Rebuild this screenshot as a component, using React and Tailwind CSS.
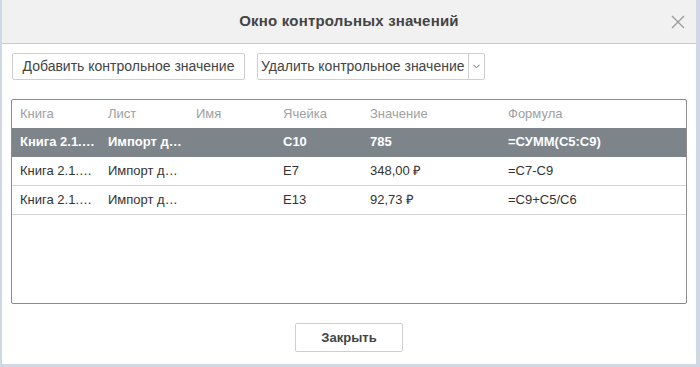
import { useState } from "react";

const rows = [
  { book: "Книга 2.1.…", sheet: "Импорт д…", name: "", cell: "C10", value: "785", formula: "=СУММ(C5:C9)" },
  { book: "Книга 2.1.…", sheet: "Импорт д…", name: "", cell: "E7", value: "348,00 ₽", formula: "=C7-C9" },
  { book: "Книга 2.1.…", sheet: "Импорт д…", name: "", cell: "E13", value: "92,73 ₽", formula: "=C9+C5/C6" },
];

// ширины колонок таблицы
const cols = ["w-[88px]", "w-[88px]", "w-[87px]", "w-[87px]", "w-[138px]", "flex-1"];

function Row({ r, selected, onClick }) {
  const cells = [r.book, r.sheet, r.name, r.cell, r.value, r.formula];
  return (
    <div
      onClick={onClick}
      className={
        "flex h-[29px] items-center border-b " +
        (selected ? "bg-[#7d848a] text-white font-bold border-[#7d848a]" : "text-[#333] border-[#d5d5d5]")
      }
    >
      {cells.map((c, i) => (
        <div key={i} className={cols[i] + " pl-[8px] whitespace-nowrap"}>
          {c}
        </div>
      ))}
    </div>
  );
}

export default function App() {
  const [selected, setSelected] = useState(0);

  return (
    <div
      className="w-[700px] h-[367px] bg-[#cfd8e3] pl-[2px]"
      style={{ fontFamily: '"Liberation Sans", Arial, sans-serif' }}
    >
      <div className="w-[694px] h-[364px] bg-white flex flex-col">
        <div className="relative h-[44px] bg-[#f1f1f1] border-b border-[#cbcbcb] flex items-center justify-center">
          <span className="text-[15px] font-bold text-[#444] tracking-[0.2px]">Окно контрольных значений</span>
          <button className="absolute right-[10px] top-[14px] text-[#999]">
            <svg width="16" height="16" viewBox="0 0 16 16" fill="none" stroke="currentColor" strokeWidth="1.2">
              <path d="M2 2 L14 14 M14 2 L2 14" />
            </svg>
          </button>
        </div>

        <div className="flex gap-[12px] px-[10px] pt-[9px] text-[14px] text-[#444]">
          <button className="h-[27px] w-[233px] border border-[#cfcfcf] rounded-[2px] bg-white">
            Добавить контрольное значение
          </button>
          <div className="h-[27px] flex border border-[#cfcfcf] rounded-[2px] bg-white">
            <button className="px-[3px]">Удалить контрольное значение</button>
            <button className="w-[16px] border-l border-[#cfcfcf] flex items-center justify-center text-[#666]">
              <svg width="7" height="5" viewBox="0 0 7 5" fill="none" stroke="currentColor" strokeWidth="1">
                <path d="M0.5 0.8 L3.5 3.8 L6.5 0.8" />
              </svg>
            </button>
          </div>
        </div>

        <div className="mx-[9px] mt-[19px] h-[205px] border border-[#8c8c8c] rounded-[2px] text-[13px] overflow-hidden">
          <div className="flex h-[28px] items-center text-[#a0a0a0]">
            {["Книга", "Лист", "Имя", "Ячейка", "Значение", "Формула"].map((h, i) => (
              <div key={h} className={cols[i] + " pl-[8px]"}>{h}</div>
            ))}
          </div>
          {rows.map((r, i) => (
            <Row key={i} r={r} selected={selected === i} onClick={() => setSelected(i)} />
          ))}
        </div>

        <div className="flex justify-center pt-[19px]">
          <button className="h-[29px] w-[108px] border border-[#cfcfcf] rounded-[2px] bg-white text-[13px] font-bold text-[#444]">
            Закрыть
          </button>
        </div>
      </div>
    </div>
  );
}
